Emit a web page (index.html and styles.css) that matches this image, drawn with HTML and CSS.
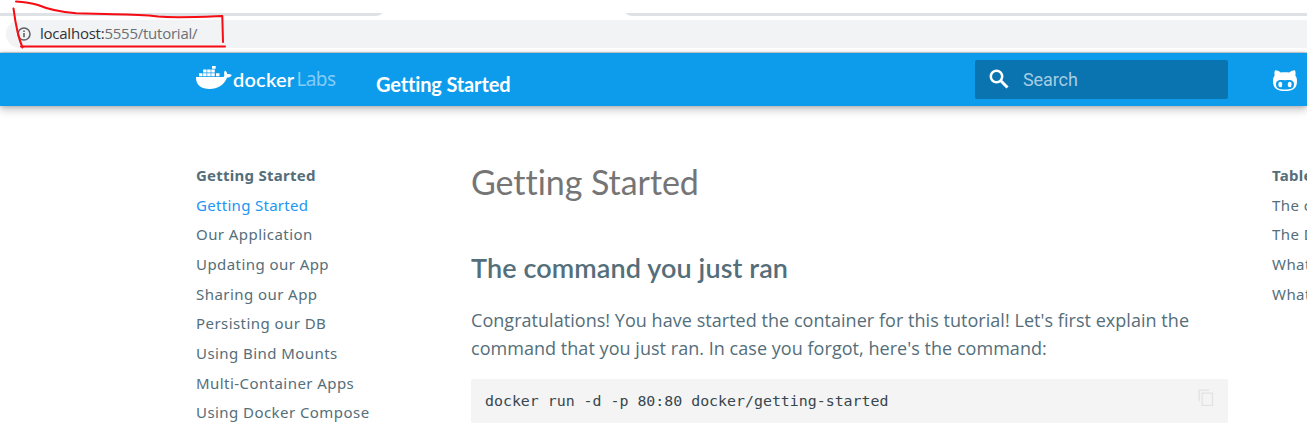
FILE: index.html
```
<!DOCTYPE html>
<html lang="en">
<head>
<meta charset="utf-8">
<title>Getting Started</title>
<link rel="stylesheet" href="styles.css">
</head>
<body>
<div class="browser">
  <div class="tabs"><i class="tab-edge tab-left"></i><i class="tab-edge tab-right"></i></div>
  <div class="address">
    <svg class="info" width="14" height="14" viewBox="0 0 14 14"><circle cx="7" cy="7" r="6" fill="none" stroke="#5f6368" stroke-width="1.5"/><path d="M7 6v4.3M7 3.4v1.5" stroke="#5f6368" stroke-width="1.6"/></svg>
    <span class="url"><b>localhost:</b>5555/tutorial/</span>
  </div>
  <svg class="annotation" width="240" height="53" viewBox="0 0 240 53"><path d="M16 1.500C24 2 31 3 38 5C45 8 61 12 76 13.300L114 14.300C135 14.500 145 15 158 16.500C177 18 197 17 222.300 16L223 42M13.500 8.500C15 20 17 35 22.500 47.500M21 46.500L225 46.500"/></svg>
</div>
<header class="header">
  <div class="logo">
    <svg width="37" height="24" viewBox="0 0 37 24" fill="#fff"><path d="M0 11h26.500c1.700-.3 2.100-1 1.700-2.600-.3-1.700 0-2.800.8-3.900 1.400.8 2.100 2 2.200 3.600 1.700-.4 3.300-.1 4.600.8-.9 1.800-2.500 2.500-4.700 2.600C28 19 22 23 13.500 23 5 23-.3 19 0 11z"/><path d="M3 7.200h3.500v3.100H3zM7.100 7.200h3.500v3.100H7.100zM11.200 7.200h3.500v3.100h-3.500zM15.300 7.200h3.500v3.100h-3.500zM20 7.200h3.500v3.100H20zM7.100 3.600h3.500v3H7.100zM11.200 3.600h3.500v3h-3.500zM15.300 3.600h3.500v3h-3.500zM16 0h3.700v2.800H16z"/></svg>
    <span class="docker">docker</span><span class="labs">Labs</span>
  </div>
  <div class="title">Getting Started</div>
  <div class="search">
    <svg width="20" height="20" viewBox="0 0 20 20" fill="none" stroke="#fff"><circle cx="7.500" cy="7.500" r="5.700" stroke-width="2.500"/><path d="M11.800 11.800L18.500 18.500" stroke-width="3"/></svg>
    <span>Search</span>
  </div>
  <svg class="github" width="24" height="21" viewBox="0 0 24 21"><path fill="#fff" d="M2 .2C4 .2 6 1.100 7.700 2.500c3-.5 5.600-.5 8.600 0C18 1.100 20 .2 22 .2c.7 2 .8 3.700.3 5.200C23.600 7 24 8.700 24 11c0 7.500-4 10-12 10S0 18.500 0 11c0-2.300.4-4 1.700-5.600C1.200 3.900 1.300 2.200 2 .2z"/><path fill="#0d9beb" d="M12 10.300c-3-.3-5-.6-6.700.2C3.600 11.300 3 12.700 3 14.200 3 18.300 6 19.400 12 19.400s9-1.100 9-5.200c0-1.500-.6-2.900-2.300-3.700-1.700-.8-3.700-.5-6.700-.2z"/><ellipse cx="7.300" cy="14.500" rx="1.900" ry="2.800" fill="#fff"/><ellipse cx="16.700" cy="14.500" rx="1.900" ry="2.800" fill="#fff"/></svg>
</header>
<main class="main">
  <nav class="nav">
    <strong>Getting Started</strong>
    <a class="active">Getting Started</a>
    <a>Our Application</a>
    <a>Updating our App</a>
    <a>Sharing our App</a>
    <a>Persisting our DB</a>
    <a>Using Bind Mounts</a>
    <a>Multi-Container Apps</a>
    <a>Using Docker Compose</a>
  </nav>
  <article class="article">
    <h1>Getting Started</h1>
    <h2>The command you just ran</h2>
    <p>Congratulations! You have started the container for this tutorial! Let's first explain the<br>command that you just ran. In case you forgot, here's the command:</p>
    <div class="code"><code>docker run -d -p 80:80 docker/getting-started</code><svg width="16" height="18" viewBox="0 0 16 18" fill="none" stroke="#e2e2e2" stroke-width="1.300"><path d="M1.200 12.500V1.200H11M4.200 4.200H14.500V16.300H4.200z"/></svg></div>
  </article>
  <aside class="nav toc">
    <strong>Table of contents</strong>
    <a>The command you just ran</a>
    <a>The Docker Dashboard</a>
    <a>What is a container?</a>
    <a>What is a container image?</a>
  </aside>
</main>
</body>
</html>
```
FILE: styles.css
```
* { box-sizing: border-box; }
body { margin: 0; width: 1307px; height: 435px; overflow: hidden; background: #fff; font-family: "Noto Sans", sans-serif; }
.browser { position: relative; height: 53px; padding-top: 13px; border-bottom: 1px solid #d5d9dc; }
.tabs { display: flex; justify-content: space-between; height: 7px; }
.tab-edge { height: 3px; background: #dee1e6; }
.tab-left { width: 382px; border-bottom-right-radius: 7px 3px; }
.tab-right { width: 681px; border-bottom-left-radius: 7px 3px; }
.address { display: flex; align-items: center; height: 28px; margin-left: 6px; padding-left: 11px; background: #f1f3f4; border-radius: 14px 0 0 14px; }
.url { margin: -2px 0 0 9px; color: #6b6f73; font: 15px/28px "Open Sans", sans-serif; letter-spacing: -.24px; }
.url b { color: #303236; font-weight: 400; }
.annotation { position: absolute; left: 0; top: 0; fill: none; stroke: #f60c12; stroke-width: 2; stroke-linecap: round; stroke-linejoin: round; }
.header { position: relative; display: flex; align-items: flex-start; height: 53px; background: #0d9beb; color: #fff; box-shadow: 0 0 4px rgba(0,0,0,.2), 0 4px 8px rgba(0,0,0,.22); }
.logo { display: flex; width: 180px; margin-left: 196px; padding-top: 13px; }
.docker { margin-top: -1px; font: 600 20px/28px Lato, sans-serif; letter-spacing: .2px; }
.labs { margin: -1px 0 0 2px; color: #83ccf7; font: 19px/28px "Noto Sans", sans-serif; letter-spacing: -.6px; }
.title { width: 599px; padding-top: 17px; font: 700 20px/28px Lato, sans-serif; letter-spacing: -.15px; }
.search { display: flex; width: 253px; height: 39px; margin-top: 7px; padding: 9px 0 0 14px; background: #0a74b0; border-radius: 2px; }
.search span { margin-left: 14px; color: #a7cce2; font: 18px/22px Roboto, sans-serif; letter-spacing: -.1px; }
.github { margin: 17px 0 0 45px; }
.main { display: flex; height: 329px; overflow: hidden; }
.nav { display: flex; flex: none; flex-direction: column; width: 275px; padding-top: 55px; margin-left: 196px; color: #546e7a; font-size: 15px; line-height: 29.650px; letter-spacing: .44px; white-space: nowrap; }
.nav strong { font-weight: 700; letter-spacing: .25px; }
.nav .active { color: #2196f3; letter-spacing: .3px; }
.article { flex: none; width: 757px; color: #546e7a; white-space: nowrap; }
h1 { margin: 53px 0 0; color: #757575; font: 400 34px/46px Lato, sans-serif; letter-spacing: -.05px; font-variant-ligatures: none; }
h2 { margin: 44px 0 0; font: 600 27px/38px Lato, sans-serif; letter-spacing: .1px; }
p { margin: 19px 0 0; font: 18px/28px "Open Sans", sans-serif; letter-spacing: .04px; }
.code { display: flex; justify-content: space-between; height: 44px; margin-top: 17px; padding: 10px 14px 0 14px; background: #f4f4f4; border-radius: 2px; }
code { color: #37474f; font: 14.900px/25px "DejaVu Sans Mono", monospace; }
.toc { width: 35px; margin-left: 44px; overflow: hidden; }
```
